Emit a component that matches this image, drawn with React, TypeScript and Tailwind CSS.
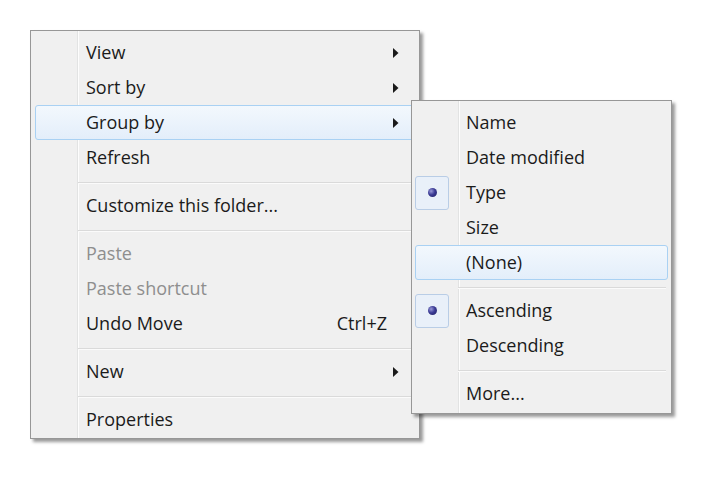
import React from "react";

type Item =
  | { kind: "item"; label: string; arrow?: boolean; disabled?: boolean; hover?: boolean; shortcut?: string; radio?: boolean }
  | { kind: "sep" };

const mainItems: Item[] = [
  { kind: "item", label: "View", arrow: true },
  { kind: "item", label: "Sort by", arrow: true },
  { kind: "item", label: "Group by", arrow: true, hover: true },
  { kind: "item", label: "Refresh" },
  { kind: "sep" },
  { kind: "item", label: "Customize this folder..." },
  { kind: "sep" },
  { kind: "item", label: "Paste", disabled: true },
  { kind: "item", label: "Paste shortcut", disabled: true },
  { kind: "item", label: "Undo Move", shortcut: "Ctrl+Z" },
  { kind: "sep" },
  { kind: "item", label: "New", arrow: true },
  { kind: "sep" },
  { kind: "item", label: "Properties" },
];

const subItems: Item[] = [
  { kind: "item", label: "Name" },
  { kind: "item", label: "Date modified" },
  { kind: "item", label: "Type", radio: true },
  { kind: "item", label: "Size" },
  { kind: "item", label: "(None)", hover: true },
  { kind: "sep" },
  { kind: "item", label: "Ascending", radio: true },
  { kind: "item", label: "Descending" },
  { kind: "sep" },
  { kind: "item", label: "More..." },
];

function Arrow() {
  return (
    <svg width="6" height="10" viewBox="0 0 6 10" className="ml-auto mr-[15px] shrink-0">
      <path d="M0 0 L5.5 5 L0 10 Z" fill="#1a1a1a" />
    </svg>
  );
}

function Radio() {
  return (
    <div className="w-[34px] h-[34px] rounded-[3px] border border-[#b9cde6] bg-[#e9f0f9] flex items-center justify-center">
      <div className="w-[9px] h-[9px] rounded-full bg-[radial-gradient(circle_at_35%_35%,#9a9ad8_0%,#3b3b95_45%,#1f1f5e_100%)]" />
    </div>
  );
}

function Row({ it }: { it: Item }) {
  if (it.kind === "sep") {
    return (
      <div className="h-[13px] pt-[7px] pl-[43px] pr-[2px]">
        <div className="h-[1px] bg-[#dadada]" />
        <div className="h-[1px] bg-[#fbfbfb]" />
      </div>
    );
  }
  return (
    <div
      className={
        "h-[35px] flex items-center border rounded-[3px] " +
        (it.hover
          ? "border-[#a9d1f3] bg-[linear-gradient(#f3f8fd,#e3eefa)]"
          : "border-transparent")
      }
    >
      <div className="w-[51px] shrink-0 -ml-[1px] flex items-center">{it.radio && <Radio />}</div>
      <span
        className={
          "flex-1 pb-[2px] text-[18px] leading-none whitespace-nowrap " +
          (it.disabled ? "text-[#8e8e8e]" : "text-[#1b1b1b]")
        }
      >
        {it.label}
      </span>
      {it.shortcut && (
        <span className="mr-[27px] pb-[2px] text-[18px] leading-none text-[#1b1b1b]">{it.shortcut}</span>
      )}
      {it.arrow && <Arrow />}
    </div>
  );
}

function Menu({ items, className, pad }: { items: Item[]; className: string; pad: string }) {
  return (
    <div
      className={
        "absolute border border-[#979797] bg-[#f0f0f0] shadow-[3px_3px_3px_rgba(0,0,0,0.4)] " + className
      }
    >
      <div
        className={
          "h-full flex flex-col pt-[4px] bg-[linear-gradient(to_right,transparent_46px,#e2e3e3_46px,#e2e3e3_47px,#fdfdfd_47px,#fdfdfd_48px,transparent_48px)] " +
          pad
        }
      >
        {items.map((it, i) => (
          <Row key={i} it={it} />
        ))}
      </div>
    </div>
  );
}

export default function App() {
  return (
    <div
      className="relative w-[720px] h-[493px] bg-white overflow-hidden"
      style={{ fontFamily: '"Open Sans", "Noto Sans", sans-serif' }}
    >
      <Menu items={mainItems} className="left-[30px] top-[30px] w-[390px] h-[409px]" pad="px-[4px]" />
      <Menu items={subItems} className="left-[411px] top-[100px] w-[261px] h-[314px] z-20" pad="px-[3px]" />
    </div>
  );
}
